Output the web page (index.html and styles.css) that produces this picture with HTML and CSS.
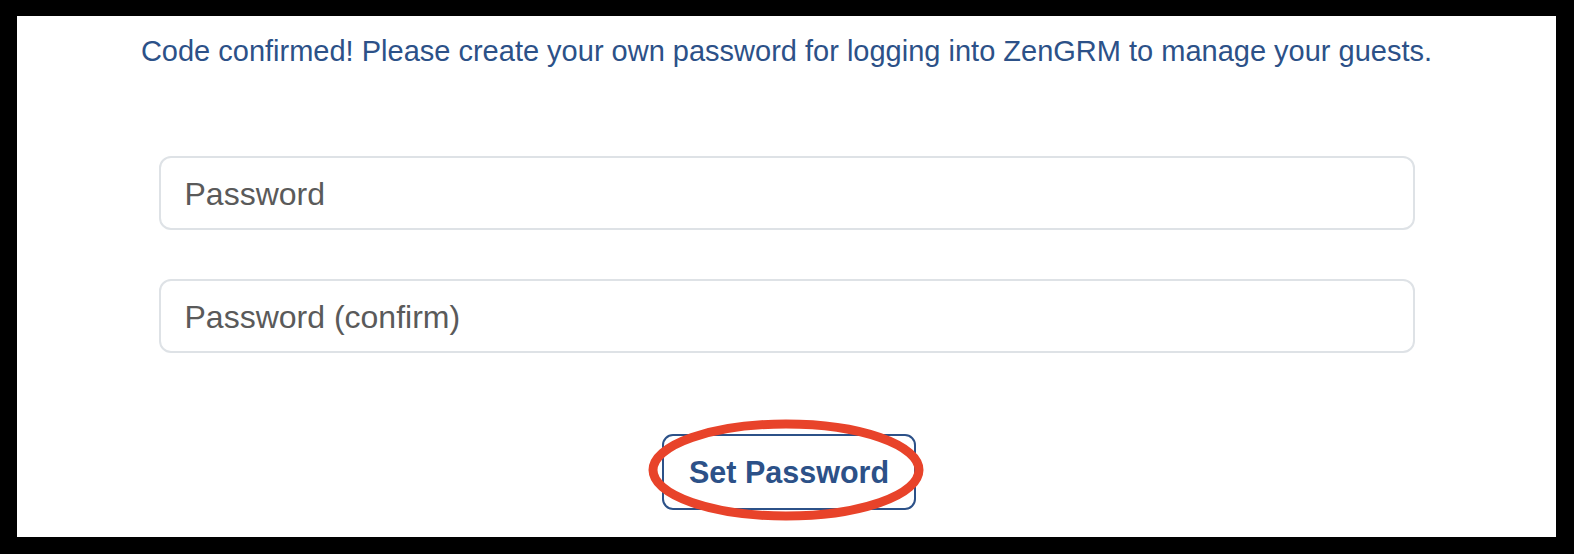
FILE: index.html
```html
<!doctype html>
<html lang="en">
    <head>
        <meta charset="UTF-8" />
        <meta name="viewport" content="width=device-width, initial-scale=1.0" />
        <title>Set Password</title>
        <link rel="stylesheet" href="styles.css">
    </head>
    <body>
        <div class="frame">
            <p class="message">Code confirmed! Please create your own password for logging into ZenGRM to manage your guests.</p>

            <form class="password-form">
                <input type="password" id="password" placeholder="Password" />
                <input type="password" id="password-confirm" placeholder="Password (confirm)" />

                <div class="button-wrap">
                    <button type="button" id="set-button">Set Password</button>
                    <!-- красный овал поверх кнопки -->
                    <svg class="highlight" width="290" height="110" viewBox="0 0 290 110">
                        <ellipse cx="145" cy="55" rx="133" ry="46" fill="none" stroke="#e8432a" stroke-width="9" />
                    </svg>
                </div>
            </form>
        </div>
    </body>
</html>
```

FILE: styles.css
```css
body {
    margin: 0;
    padding: 16px 18px 17px 17px;
    background-color: #000;
    font-family: "Liberation Sans", Arial, sans-serif;
}
.frame {
    background-color: #fff;
    height: 521px;
    display: flex;
    flex-direction: column;
    align-items: center;
}
.message {
    margin: 0;
    padding-top: 18px;
    font-size: 29px;
    line-height: 34px;
    color: #2c5188;
    text-align: center;
}
.password-form {
    width: 1256px;
    margin-top: 88px;
    display: flex;
    flex-direction: column;
    gap: 49px;
}
input[type="password"] {
    box-sizing: border-box;
    height: 74px;
    padding: 2px 24px 0;
    border: 2px solid #dee2e6;
    border-radius: 12px;
    font-family: inherit;
    font-size: 32px;
    color: #333;
    background-color: #fff;
    outline: none;
}
input::placeholder {
    color: #5a5a5a;
}
.button-wrap {
    position: relative;
    align-self: center;
    margin-top: 32px;
    margin-left: 5px;
}
button {
    box-sizing: border-box;
    width: 254px;
    height: 76px;
    background-color: #fff;
    border: 2px solid #2c5188;
    border-radius: 11px;
    color: #2c5188;
    font-family: inherit;
    font-size: 30.5px;
    font-weight: bold;
    cursor: pointer;
}
.highlight {
    position: absolute;
    left: -21px;
    top: -19px;
    pointer-events: none;
}
```
